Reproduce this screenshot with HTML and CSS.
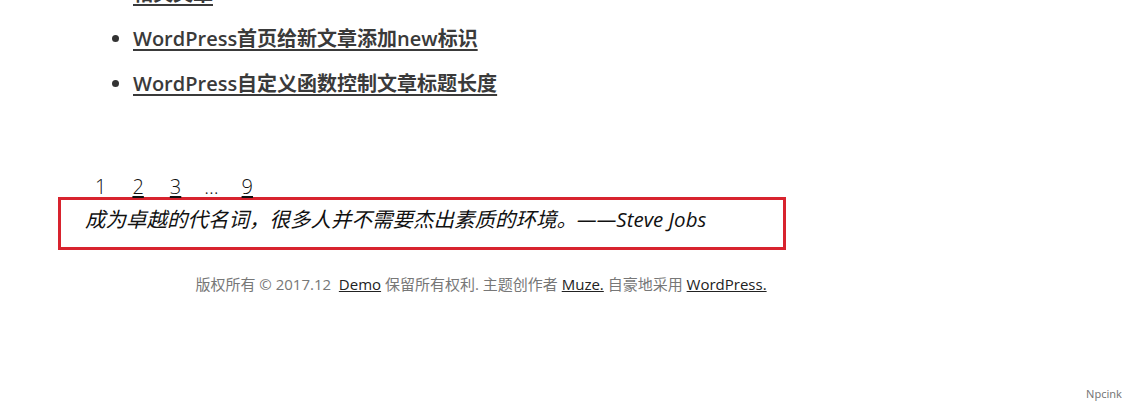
FILE: index.html
```html
<!DOCTYPE html>
<html lang="zh-CN">
<head>
<meta charset="utf-8">
<title>Demo</title>
<link rel="stylesheet" href="styles.css">
</head>
<body>
<div class="page">
  <ul class="related">
    <li><a href="#">相关文章 </a></li>
    <li><a href="#">WordPress首页给新文章添加new标识</a></li>
    <li><a href="#">WordPress自定义函数控制文章标题长度</a></li>
  </ul>
  <nav class="pager">
    <span class="current">1</span>
    <a href="#">2</a>
    <a href="#">3</a>
    <span class="dots">…</span>
    <a href="#">9</a>
  </nav>
  <div class="quote">成为卓越的代名词，很多人并不需要杰出素质的环境。——Steve Jobs</div>
  <footer class="footer">版权所有 © 2017.12&nbsp; <a href="#">Demo</a> 保留所有权利. 主题创作者 <a href="#">Muze.</a> 自豪地采用 <a href="#">WordPress.</a></footer>
</div>
<div class="mark">Npcink</div>
</body>
</html>
```
FILE: styles.css
```css
html, body {
  margin: 0;
  padding: 0;
  background: #fff;
}
body {
  font-family: "Open Sans", "Noto Sans CJK SC", sans-serif;
  color: #222;
  height: 411px;
  overflow: hidden;
  position: relative;
}
.page {
  width: 962px;
}
.related {
  margin: -29px 0 0 58px;
  padding: 0 0 0 75px;
  list-style: disc;
}
.related li {
  font-size: 20px;
  font-weight: 600;
  line-height: 45px;
  color: #333;
}
.related a {
  color: #3a3a3a;
  text-decoration: underline;
  text-underline-offset: 3px;
}
.pager {
  margin: 71px 0 0 95px;
  display: flex;
  font-family: "Open Sans", sans-serif;
  font-size: 20px;
  line-height: 20px;
  font-weight: 300;
}
.pager span, .pager a {
  color: #111;
  margin-right: 26px;
}
.pager .dots {
  margin-left: -3px;
  margin-right: 23px;
}
.pager a {
  text-decoration: underline;
  text-underline-offset: 2px;
}
.quote {
  margin-left: 58px;
  height: 47px;
  border: 3px solid #d8232e;
  padding: 0 0 0 24px;
  width: 698px;
  font-style: italic;
  font-size: 20.5px;
  line-height: 38px;
  color: #111;
}
.footer {
  margin-top: 24px;
  text-align: center;
  font-size: 15px;
  line-height: 20px;
  color: #777;
}
.footer a {
  color: #222;
  text-decoration: underline;
}
.mark {
  position: absolute;
  right: 8px;
  bottom: 10px;
  font-size: 11px;
  color: #777;
  font-family: "Noto Sans", sans-serif;
}
```
